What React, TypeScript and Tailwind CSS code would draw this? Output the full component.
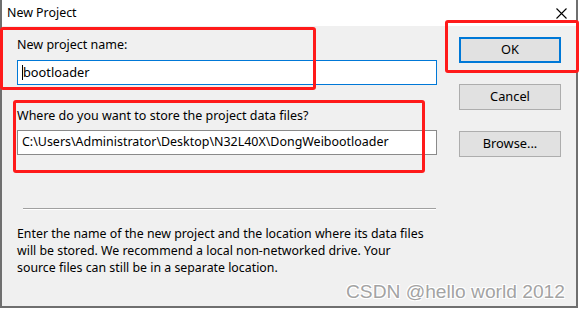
import React from "react";

const font = { fontFamily: '"Noto Sans", "Noto Sans CJK SC", sans-serif' };

export default function App() {
  return (
    <div className="relative w-[580px] h-[310px] bg-white overflow-hidden text-black" style={font}>
      <div className="w-[578px] h-[308px] border-l-2 border-r-2 border-b-2 border-[#6f6f6f] bg-[#f0f0f0] flex flex-col">
        {/* Title bar */}
        <div className="h-[26px] bg-white flex items-center justify-between pl-[5px] pr-[8px]">
          <span className="text-[12.4px] leading-none">New Project</span>
          <svg width="11" height="11" viewBox="0 0 11 11" className="mr-[1px]">
            <path d="M0.5 0.5 L10.5 10.5 M10.5 0.5 L0.5 10.5" stroke="#000" strokeWidth="1.1" />
          </svg>
        </div>
        {/* Body */}
        <div className="flex flex-1 pl-[15px] pt-[11px]">
          <div className="w-[420px] flex flex-col">
            <div className="text-[12.5px] leading-[16px] h-[16px]">New project name:</div>
            <div className="mt-[7px] h-[25px] border border-[#0078d7] bg-white flex items-center pl-[4px] text-[12.8px]">
              <span className="inline-block w-[1px] h-[15px] bg-black" />
              <span>bootloader</span>
            </div>
            <div className="mt-[23px] text-[12.5px] leading-[16px] h-[16px] whitespace-nowrap">Where do you want to store the project data files?</div>
            <div className="mt-[6px] h-[25px] border border-[#8a8a8a] bg-white flex items-center pl-[4px] text-[12.45px] whitespace-nowrap">
              C:\Users\Administrator\Desktop\N32L40X\DongWeibootloader
            </div>
            <div className="mt-[53px] ml-[6px] w-[413px] h-[2px] border-t border-[#a0a0a0] border-b border-b-white" />
            <div className="mt-[15px] text-[12.35px] leading-[17px] whitespace-nowrap">
              Enter the name of the new project and the location where its data files
              <br />
              will be stored. We recommend a local non-networked drive. Your
              <br />
              source files can still be in a separate location.
            </div>
          </div>
          <div className="ml-[22px] flex flex-col gap-[21px]">
            <button className="w-[102px] h-[26px] border-2 border-[#0078d7] bg-[#e1e1e1] text-[12.8px] flex items-center justify-center">OK</button>
            <button className="w-[102px] h-[26px] border border-[#adadad] bg-[#e1e1e1] text-[12.8px] flex items-center justify-center">Cancel</button>
            <button className="w-[102px] h-[26px] border border-[#adadad] bg-[#e1e1e1] text-[12.8px] flex items-center justify-center">Browse...</button>
          </div>
        </div>
      </div>

      {/* Red annotation boxes */}
      <div className="absolute left-[0px] top-[27px] w-[316px] h-[63px] border-[3px] border-[#ff1a1a] rounded-[3px]" />
      <div className="absolute left-[445px] top-[20px] w-[134px] h-[53px] border-[3px] border-[#ff1a1a] rounded-[3px]" />
      <div className="absolute left-[13px] top-[100px] w-[412px] h-[73px] border-[3px] border-[#ff1a1a] rounded-[3px]" />

      {/* Watermark */}
      <div
        className="absolute left-[346px] top-[281px] text-[19.2px] leading-[22px] text-[#a3a3a3] whitespace-nowrap [text-shadow:1px_1px_0_#fff,-1px_-1px_0_#fff,1px_-1px_0_#fff,-1px_1px_0_#fff]"
        style={{ fontFamily: '"Liberation Sans", Arial, sans-serif' }}
      >
        CSDN @hello world 2012
      </div>
    </div>
  );
}
